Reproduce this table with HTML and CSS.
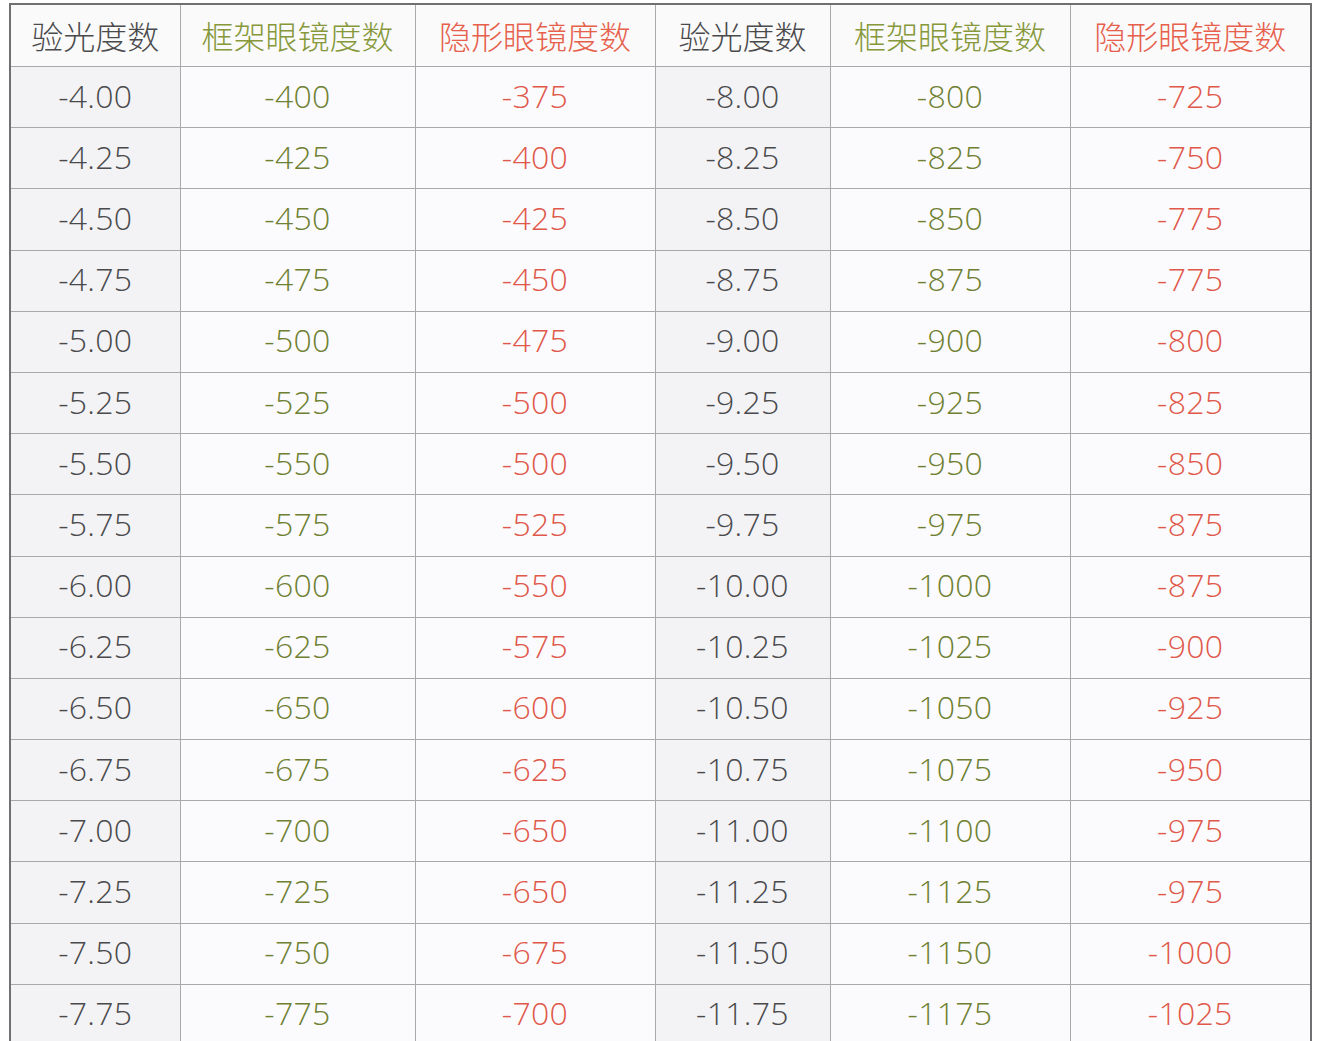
FILE: index.html
```html
<!DOCTYPE html>
<html lang="zh">
<head>
<meta charset="utf-8">
<title>度数对照表</title>
<link rel="stylesheet" href="styles.css">
</head>
<body>
<table class="chart">
  <colgroup>
    <col class="c1"><col class="c2"><col class="c3"><col class="c4"><col class="c5"><col class="c6">
  </colgroup>
  <thead>
    <tr class="head">
      <th class="gray">验光度数</th>
      <th class="green">框架眼镜度数</th>
      <th class="red">隐形眼镜度数</th>
      <th class="gray">验光度数</th>
      <th class="green">框架眼镜度数</th>
      <th class="red">隐形眼镜度数</th>
    </tr>
  </thead>
  <tbody>
    <tr><td class="gray shade">-4.00</td><td class="green">-400</td><td class="red">-375</td><td class="gray shade">-8.00</td><td class="green">-800</td><td class="red">-725</td></tr>
    <tr><td class="gray shade">-4.25</td><td class="green">-425</td><td class="red">-400</td><td class="gray shade">-8.25</td><td class="green">-825</td><td class="red">-750</td></tr>
    <tr><td class="gray shade">-4.50</td><td class="green">-450</td><td class="red">-425</td><td class="gray shade">-8.50</td><td class="green">-850</td><td class="red">-775</td></tr>
    <tr><td class="gray shade">-4.75</td><td class="green">-475</td><td class="red">-450</td><td class="gray shade">-8.75</td><td class="green">-875</td><td class="red">-775</td></tr>
    <tr><td class="gray shade">-5.00</td><td class="green">-500</td><td class="red">-475</td><td class="gray shade">-9.00</td><td class="green">-900</td><td class="red">-800</td></tr>
    <tr><td class="gray shade">-5.25</td><td class="green">-525</td><td class="red">-500</td><td class="gray shade">-9.25</td><td class="green">-925</td><td class="red">-825</td></tr>
    <tr><td class="gray shade">-5.50</td><td class="green">-550</td><td class="red">-500</td><td class="gray shade">-9.50</td><td class="green">-950</td><td class="red">-850</td></tr>
    <tr><td class="gray shade">-5.75</td><td class="green">-575</td><td class="red">-525</td><td class="gray shade">-9.75</td><td class="green">-975</td><td class="red">-875</td></tr>
    <tr><td class="gray shade">-6.00</td><td class="green">-600</td><td class="red">-550</td><td class="gray shade">-10.00</td><td class="green">-1000</td><td class="red">-875</td></tr>
    <tr><td class="gray shade">-6.25</td><td class="green">-625</td><td class="red">-575</td><td class="gray shade">-10.25</td><td class="green">-1025</td><td class="red">-900</td></tr>
    <tr><td class="gray shade">-6.50</td><td class="green">-650</td><td class="red">-600</td><td class="gray shade">-10.50</td><td class="green">-1050</td><td class="red">-925</td></tr>
    <tr><td class="gray shade">-6.75</td><td class="green">-675</td><td class="red">-625</td><td class="gray shade">-10.75</td><td class="green">-1075</td><td class="red">-950</td></tr>
    <tr><td class="gray shade">-7.00</td><td class="green">-700</td><td class="red">-650</td><td class="gray shade">-11.00</td><td class="green">-1100</td><td class="red">-975</td></tr>
    <tr><td class="gray shade">-7.25</td><td class="green">-725</td><td class="red">-650</td><td class="gray shade">-11.25</td><td class="green">-1125</td><td class="red">-975</td></tr>
    <tr><td class="gray shade">-7.50</td><td class="green">-750</td><td class="red">-675</td><td class="gray shade">-11.50</td><td class="green">-1150</td><td class="red">-1000</td></tr>
    <tr><td class="gray shade">-7.75</td><td class="green">-775</td><td class="red">-700</td><td class="gray shade">-11.75</td><td class="green">-1175</td><td class="red">-1025</td></tr>
  </tbody>
</table>
</body>
</html>
```

FILE: styles.css
```css
html, body {
  margin: 0;
  padding: 0;
  background: #ffffff;
  overflow: hidden;
}
body {
  padding: 3px 0 0 9px;
  font-family: "Open Sans", "Noto Sans", "Noto Sans CJK SC", sans-serif;
}
.chart {
  border-collapse: collapse;
  table-layout: fixed;
  width: 1303px;
  border: 2px solid #707070;
  background: #fbfbfd;
}
.c1 { width: 170px; }
.c2 { width: 235px; }
.c3 { width: 240px; }
.c4 { width: 175px; }
.c5 { width: 240px; }
.c6 { width: 241px; }
.chart th,
.chart td {
  border: 1px solid #a9a9ab;
  text-align: center;
  vertical-align: middle;
  padding: 0;
  font-size: 32px;
  font-weight: 300;
  line-height: 1;
  letter-spacing: 0.3px;
}
.chart .head th {
  height: 59px;
  background: #fafafa;
  font-family: "Noto Sans CJK SC", sans-serif;
  font-size: 32px;
  font-weight: 300;
  letter-spacing: 0;
  padding: 0 0 2px;
}
.chart tbody tr {
  height: 61.2px;
}
.chart td {
  padding: 0 0 3px;
}
.gray { color: #4a4a4c; }
.green { color: #6f8032; }
.red { color: #e0584a; }
.head .green { color: #86983a; }
.head .red { color: #e6604c; }
.shade { background: #f3f3f6; }
```
